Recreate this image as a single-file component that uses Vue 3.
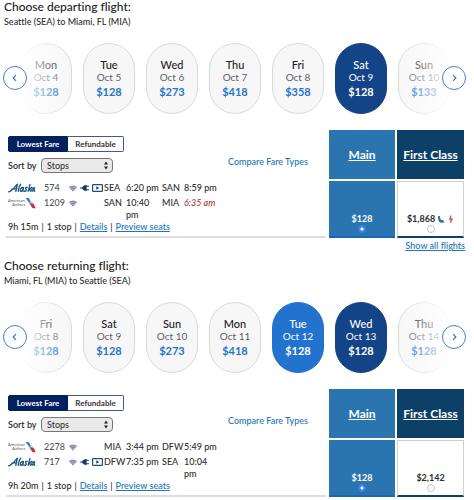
<script setup>
import { reactive } from 'vue'

const trips = reactive([
  {
    id: 'depart',
    title: 'Choose departing flight:',
    route: 'Seattle (SEA) to Miami, FL (MIA)',
    days: [
      { day: 'Mon', date: 'Oct 4', price: '$128' },
      { day: 'Tue', date: 'Oct 5', price: '$128' },
      { day: 'Wed', date: 'Oct 6', price: '$273' },
      { day: 'Thu', date: 'Oct 7', price: '$418' },
      { day: 'Fri', date: 'Oct 8', price: '$358' },
      { day: 'Sat', date: 'Oct 9', price: '$128', state: 'selected' },
      { day: 'Sun', date: 'Oct 10', price: '$133' }
    ],
    legs: [
      { airline: 'alaska', number: '574', power: true, from: 'SEA', departs: '6:20 pm', to: 'SAN', arrives: '8:59 pm' },
      { airline: 'american', number: '1209', power: false, from: 'SAN', departs: '10:40 pm', to: 'MIA', arrives: '6:35 am', nextDay: true }
    ],
    duration: '9h 15m',
    main: '$128',
    first: '$1,868',
    mixed: true,
    showAll: true,
    fare: 'main'
  },
  {
    id: 'return',
    title: 'Choose returning flight:',
    route: 'Miami, FL (MIA) to Seattle (SEA)',
    days: [
      { day: 'Fri', date: 'Oct 8', price: '$128' },
      { day: 'Sat', date: 'Oct 9', price: '$128' },
      { day: 'Sun', date: 'Oct 10', price: '$273' },
      { day: 'Mon', date: 'Oct 11', price: '$418' },
      { day: 'Tue', date: 'Oct 12', price: '$128', state: 'hovered' },
      { day: 'Wed', date: 'Oct 13', price: '$128', state: 'selected' },
      { day: 'Thu', date: 'Oct 14', price: '$128' }
    ],
    legs: [
      { airline: 'american', number: '2278', power: false, from: 'MIA', departs: '3:44 pm', to: 'DFW', arrives: '5:49 pm' },
      { airline: 'alaska', number: '717', power: true, from: 'DFW', departs: '7:35 pm', to: 'SEA', arrives: '10:04 pm' }
    ],
    duration: '9h 20m',
    main: '$128',
    first: '$2,142',
    mixed: false,
    showAll: false,
    fare: 'main'
  }
])
</script>

<template>
  <main class="page">
    <section v-for="trip in trips" :key="trip.id" class="trip">
      <h2 class="title">{{ trip.title }}</h2>
      <p class="route">{{ trip.route }}</p>

      <div class="carousel">
        <button v-for="d in trip.days" :key="d.date" type="button" class="pill" :class="d.state">
          <span class="day">{{ d.day }}</span>
          <span class="date">{{ d.date }}</span>
          <span class="price">{{ d.price }}</span>
        </button>
        <div class="fade fade-left"></div>
        <div class="fade fade-right"></div>
        <button type="button" class="arrow prev" aria-label="Previous dates">
          <svg viewBox="0 0 24 24"><path d="M13 8.800l-3 3.200 3 3.200" /></svg>
        </button>
        <button type="button" class="arrow next" aria-label="Next dates">
          <svg viewBox="0 0 24 24"><path d="M11 8.800l3 3.200-3 3.200" /></svg>
        </button>
      </div>

      <div class="results">
        <div class="filters">
          <div>
            <div class="toggle">
              <button type="button" class="tab active">Lowest Fare</button>
              <button type="button" class="tab">Refundable</button>
            </div>
            <div class="sort">
              <label :for="trip.id + '-sort'">Sort by</label>
              <div class="select">
                <select :id="trip.id + '-sort'">
                  <option>Stops</option>
                  <option>Price</option>
                </select>
                <svg viewBox="0 0 6 10"><path d="M3 0.500L5.200 4H.8zM3 9.500L.8 6h4.400z" /></svg>
              </div>
            </div>
          </div>
          <a href="#" class="compare">Compare Fare Types</a>
        </div>
        <div class="fare-head main-head"><a href="#">Main</a></div>
        <div class="fare-head first-head"><a href="#">First Class</a></div>

        <div class="flight">
          <table class="legs">
            <colgroup>
              <col class="c-logo" /><col class="c-num" /><col class="c-icons" /><col class="c-code" />
              <col class="c-time" /><col class="c-code" /><col />
            </colgroup>
            <tbody>
              <tr v-for="leg in trip.legs" :key="leg.number">
                <td>
                  <svg v-if="leg.airline === 'alaska'" class="logo" viewBox="0 0 28 12" role="img" aria-label="Alaska">
                    <g fill="none" stroke="#17537d" stroke-width="1.300" stroke-linecap="round" stroke-linejoin="round">
                      <path d="M.6 9.800C4 9.200 6.500 5 9.400 2.200L7.800 9.400M3.800 7.200l5-.5" />
                      <path d="M12.600 2.200c-1.200 2-2.200 4.600-2.400 7.200" />
                      <path d="M15.600 5.600c-2-.4-3.400 1-3.400 2.700 0 1.800 2.400 1 3.200-2.100-.5 1.700-.7 2.500-.3 3.200" />
                      <path d="M19.300 5.400c-1.500-.4-2.200.6-1.400 1.600.9 1.200.3 2.500-1.800 2.200" />
                      <path d="M22 2.400l-1.900 7M23.500 5.400c-.7 1-1.500 1.600-2.400 1.900.9.200 1.200 1 1.500 2" />
                      <path d="M26.600 5.800c-1.700-.4-2.900.9-2.900 2.400 0 1.600 2 .9 2.700-2-.4 1.600-.5 2.400.2 3.100" />
                    </g>
                  </svg>
                  <svg v-else class="logo" viewBox="0 0 28 12" role="img" aria-label="American Airlines">
                    <text x="0" y="5" class="brand">American</text>
                    <text x="4" y="9" class="brand">Airlines</text>
                    <path d="M17.500 1h2c1 0 1.600.4 2 1.200l2.300 4-1.600.7z" fill="#2486bd" />
                    <path d="M21.800 4.800c.8-.9 2-.8 2.600.2l.7 1.200-2.500.6z" fill="#c4cdd4" />
                    <path d="M21.600 6.400h2.700c.8 0 1.200.3 1.600 1l1.900 3.800h-2c-1 0-1.600-.3-2.100-1.200z" fill="#c72f3b" />
                  </svg>
                </td>
                <td class="num">{{ leg.number }}</td>
                <td>
                  <div class="amenities">
                    <svg class="wifi" viewBox="0 0 8 7" role="img" aria-label="Wi-Fi">
                      <path d="M0 2.200C2.300.3 5.700.3 8 2.200L4 6.800z" fill="#a7a9c8" />
                      <path d="M.4 2.400c2.200-1.600 5-1.600 7.200 0M1.700 3.900c1.400-1 3.200-1 4.600 0M3.200 5.400c.5-.3 1.100-.3 1.600 0" fill="none" stroke="#7477a5" stroke-width=".7" />
                    </svg>
                    <svg v-if="leg.power" class="plug" viewBox="0 0 9 6" role="img" aria-label="Power">
                      <path d="M0 3h3M6 1.300h3M6 4.700h3" stroke="#163c68" stroke-width="1" />
                      <path d="M6.600 0v6C4 6 2.600 4.800 2 3 2.600 1.200 4 0 6.600 0z" fill="#163c68" />
                    </svg>
                    <svg v-if="leg.power" class="video" viewBox="0 0 11 8" role="img" aria-label="Entertainment">
                      <rect x=".6" y=".6" width="9.800" height="6.800" rx=".6" fill="#fff" stroke="#234c7d" stroke-width="1.200" />
                      <path d="M4.300 2.200L7.200 4 4.300 5.800z" fill="#163c68" />
                    </svg>
                  </div>
                </td>
                <td>{{ leg.from }}</td>
                <td><div class="clock">{{ leg.departs }}</div></td>
                <td>{{ leg.to }}</td>
                <td><div class="clock" :class="{ late: leg.nextDay }">{{ leg.arrives }}</div></td>
              </tr>
            </tbody>
          </table>
          <div class="summary">
            <span>{{ trip.duration }}</span><span>|</span><span>1 stop</span><span>|</span>
            <a href="#">Details</a><span>|</span><a href="#">Preview seats</a>
          </div>
        </div>
        <label class="fare main-fare">
          <span>{{ trip.main }}</span>
          <input v-model="trip.fare" type="radio" :name="trip.id + '-fare'" value="main" />
        </label>
        <label class="fare first-fare">
          <span class="amount">
            {{ trip.first }}
            <svg v-if="trip.mixed" class="marks" viewBox="0 0 17 9" aria-hidden="true">
              <path d="M1 1h1.800l.8 3.400 3 .8V7H3C1.500 7 1.200 5 1 1z" fill="#3f6c9c" />
              <path d="M3 7.500h4.500" stroke="#89a5c3" stroke-width="1" />
              <path d="M14 .3l.3 2.200L16 4l-1.600 1.400L13.600 8.500l-.6-2.700L11.500 4.800 13 3z" fill="#d98c86" />
              <path d="M14 .3l-1 3.200 2.200 1-1.600 3.500" fill="none" stroke="#bb3f3a" stroke-width=".8" />
            </svg>
          </span>
          <input v-model="trip.fare" type="radio" :name="trip.id + '-fare'" value="first" />
        </label>
      </div>

      <div v-if="trip.showAll" class="more"><a href="#">Show all flights</a></div>
    </section>
  </main>
</template>

<style>
body {
  margin: 0;
  background: #fff;
}
</style>

<style scoped>
.page {
  font-family: Lato, "Liberation Sans", sans-serif;
  font-size: 9px;
  font-weight: 500;
  font-variant-ligatures: none;
  line-height: 12px;
  color: #2d2d2d;
}

button,
select {
  font-family: inherit;
  padding: 0;
  margin: 0;
}

a {
  color: #2374b8;
}

.title {
  margin: 0;
  padding: 0 4px;
  font-size: 12px;
  font-weight: 500;
  line-height: 14px;
  color: #222;
}

.route {
  margin: 0;
  padding: 2px 4px;
}

.carousel {
  position: relative;
  display: grid;
  grid-template-columns: repeat(7, 1fr);
  gap: 11px;
  margin-top: 13px;
  padding: 0 24px 0 20px;
}

.pill {
  display: flex;
  flex-direction: column;
  align-items: center;
  justify-content: center;
  height: 71px;
  border: 1px solid #dadada;
  border-radius: 26px;
  background: #f7f7f7;
  color: #222;
}

.day {
  font-size: 11px;
  font-weight: 500;
  line-height: 13px;
}

.date {
  font-size: 10px;
  line-height: 13px;
  color: #5d5d68;
}

.price {
  font-size: 11px;
  font-weight: 700;
  line-height: 15px;
  color: #2774cc;
}

.pill.selected {
  background: #134487;
  border-color: #134487;
}

.pill.hovered {
  background: #2173ce;
  border-color: #2173ce;
}

.selected span,
.hovered span {
  color: #fff;
}

.fade {
  position: absolute;
  top: 0;
  bottom: 0;
  width: 72px;
  pointer-events: none;
}

.fade-left {
  left: 0;
  background: linear-gradient(to right, #fff 26%, rgba(255, 255, 255, 0));
}

.fade-right {
  right: 6px;
  background: linear-gradient(to left, #fff 20%, rgba(255, 255, 255, 0));
}

.arrow {
  position: absolute;
  top: 23px;
  width: 24px;
  height: 24px;
  border: 1px solid #3f82c7;
  border-radius: 50%;
  background: #fff;
}

.prev {
  left: 3px;
}

.next {
  right: 8px;
}

.arrow svg {
  display: block;
  width: 100%;
  height: 100%;
}

.arrow path {
  fill: none;
  stroke: #2774cc;
  stroke-width: 1.300;
}

.results {
  display: grid;
  grid-template-columns: minmax(0, 1fr) 66px 67px;
  gap: 2px;
  margin: 16px 10px 0 6px;
}

.filters {
  display: flex;
  justify-content: space-between;
  padding: 6px 19px 0 2px;
}

.toggle {
  display: grid;
  grid-template-columns: 60px 56px;
}

.tab {
  height: 16px;
  border: 1px solid #3d5a94;
  border-left: 0;
  border-radius: 0 2px 2px 0;
  background: #fff;
  font-size: 8px;
  font-weight: 700;
  line-height: 12px;
  color: #333;
}

.tab.active {
  border: 1px solid #04215f;
  border-radius: 2px 0 0 2px;
  background: #04215f;
  color: #fff;
}

.sort {
  display: flex;
  align-items: center;
  gap: 4px;
  margin-top: 6px;
  font-weight: 600;
}

.sort label {
  width: 29px;
  white-space: nowrap;
}

.select {
  position: relative;
  width: 72px;
}

.select select {
  display: block;
  appearance: none;
  width: 100%;
  height: 15px;
  padding: 0 5px;
  border: 1px solid #777;
  border-radius: 4px;
  background: #e9e9e9;
  font-size: 9px;
  font-weight: 500;
  line-height: 12px;
  color: #333;
}

.select svg {
  position: absolute;
  right: 4px;
  top: 3px;
  width: 6px;
  height: 9px;
  fill: #222;
  pointer-events: none;
}

.compare {
  margin-top: 20px;
  text-decoration: none;
}

.fare-head {
  display: flex;
  align-items: center;
  justify-content: center;
  height: 49px;
  font-size: 12px;
  font-weight: 700;
  white-space: nowrap;
}

.fare-head a {
  color: #fff;
}

.main-head {
  background: #2a75b0;
}

.first-head {
  background: #0c4067;
}

.flight {
  display: flex;
  flex-direction: column;
  justify-content: space-between;
  margin-right: 1px;
  padding-top: 1px;
  border-bottom: 2px solid #dedede;
}

.legs {
  width: 100%;
  table-layout: fixed;
  border-collapse: collapse;
}

.legs td {
  padding: 0 0 3px;
  vertical-align: top;
}

.legs tr:last-child td {
  padding-bottom: 0;
}

.legs td:first-child {
  padding-left: 2px;
}

.c-logo {
  width: 38px;
}

.c-num {
  width: 25px;
}

.c-icons {
  width: 35px;
}

.c-code {
  width: 22px;
}

.c-time {
  width: 36px;
}

.num {
  color: #555;
}

.clock {
  width: 34px;
}

.late {
  font-style: italic;
  color: #b83232;
}

.logo {
  display: block;
  width: 28px;
  height: 12px;
}

.brand {
  font-size: 4px;
  fill: #555f68;
}

.amenities {
  display: flex;
  align-items: center;
  gap: 3px;
  height: 12px;
}

.wifi {
  width: 8px;
  height: 7px;
}

.plug {
  width: 9px;
  height: 6px;
}

.video {
  width: 11px;
  height: 8px;
}

.summary {
  display: flex;
  gap: 3px;
  padding: 0 2px 3px;
}

.fare {
  display: flex;
  flex-direction: column;
  align-items: center;
  justify-content: flex-end;
  box-sizing: border-box;
  height: 57px;
  padding-bottom: 3px;
  border-bottom: 2px solid;
  font-weight: 700;
}

.main-fare {
  background: #2a75b0;
  border-color: #1766b8;
  color: #fff;
}

.first-fare {
  border: 1px solid #cfcfcf;
  border-bottom: 2px solid #0c4067;
}

.amount {
  display: flex;
  align-items: center;
  gap: 2px;
}

.marks {
  width: 17px;
  height: 9px;
}

.fare input {
  appearance: none;
  width: 8px;
  height: 8px;
  margin: 0;
  border: 1px solid #c4c4c4;
  border-radius: 50%;
  background: #fff;
}

.fare input:checked {
  border-color: #3b7ff5;
  background: radial-gradient(circle, #fff 1px, #3b7ff5 2px);
}

.more {
  padding: 2px 9px 7px;
  text-align: right;
}
</style>
